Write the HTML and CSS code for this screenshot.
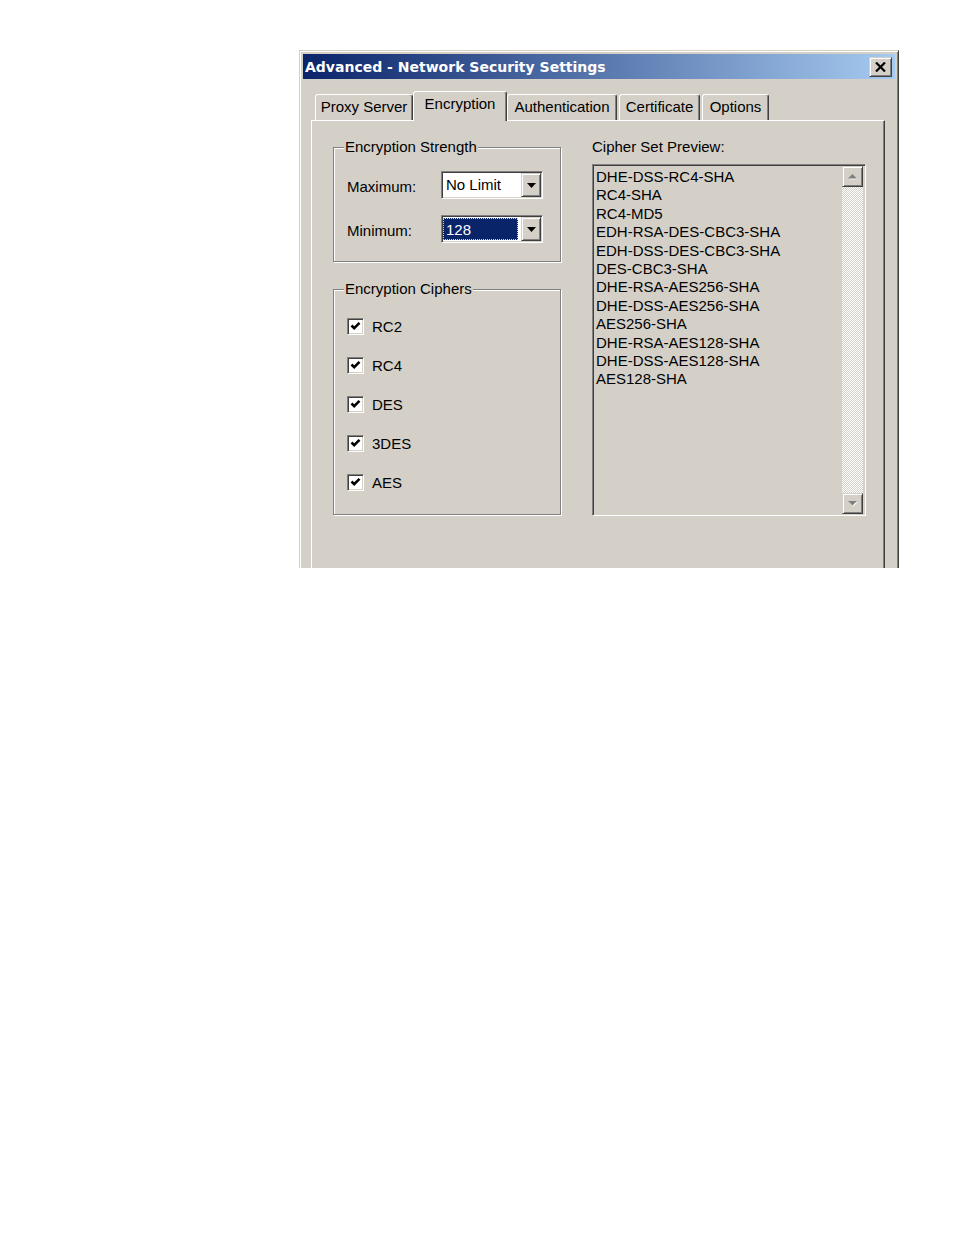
FILE: index.html
```html
<!DOCTYPE html>
<html>
<head>
<meta charset="utf-8">
<title>Advanced - Network Security Settings</title>
<link rel="stylesheet" href="styles.css">
</head>
<body>
<div class="dialog">
  <div class="titlebar">
    <span class="title">Advanced - Network Security Settings</span>
    <div class="close">
      <svg width="11" height="10" viewBox="0 0 11 10"><path d="M1 0.5 L10 9.5 M10 0.5 L1 9.5" stroke="#000" stroke-width="2.2" fill="none"/></svg>
    </div>
  </div>
  <div class="content">
    <div class="tabs">
      <div class="tab t-proxy">Proxy Server</div>
      <div class="tab active t-enc">Encryption</div>
      <div class="tab t-auth">Authentication</div>
      <div class="tab t-cert">Certificate</div>
      <div class="tab t-opt">Options</div>
    </div>
    <div class="panel">
      <div class="left">
        <fieldset class="group">
          <legend>Encryption Strength</legend>
          <div class="group-inner strength">
            <div class="row">
              <span class="lbl">Maximum:</span>
              <div class="combo">
                <span class="value">No Limit</span>
                <span class="drop"><svg width="9" height="5" viewBox="0 0 9 5"><polygon points="0,0 9,0 4.5,5" fill="#000"/></svg></span>
              </div>
            </div>
            <div class="row">
              <span class="lbl">Minimum:</span>
              <div class="combo">
                <span class="value selected">128</span>
                <span class="drop"><svg width="9" height="5" viewBox="0 0 9 5"><polygon points="0,0 9,0 4.5,5" fill="#000"/></svg></span>
              </div>
            </div>
          </div>
        </fieldset>
        <fieldset class="group ciphers">
          <legend>Encryption Ciphers</legend>
          <div class="group-inner checks">
            <div class="check-row"><span class="checkbox"><svg width="11" height="10" viewBox="0 0 11 10"><polyline points="1.5,4.5 4.2,7.2 9.5,1.8" stroke="#000" stroke-width="2.6" fill="none"/></svg></span><span>RC2</span></div>
            <div class="check-row"><span class="checkbox"><svg width="11" height="10" viewBox="0 0 11 10"><polyline points="1.5,4.5 4.2,7.2 9.5,1.8" stroke="#000" stroke-width="2.6" fill="none"/></svg></span><span>RC4</span></div>
            <div class="check-row"><span class="checkbox"><svg width="11" height="10" viewBox="0 0 11 10"><polyline points="1.5,4.5 4.2,7.2 9.5,1.8" stroke="#000" stroke-width="2.6" fill="none"/></svg></span><span>DES</span></div>
            <div class="check-row"><span class="checkbox"><svg width="11" height="10" viewBox="0 0 11 10"><polyline points="1.5,4.5 4.2,7.2 9.5,1.8" stroke="#000" stroke-width="2.6" fill="none"/></svg></span><span>3DES</span></div>
            <div class="check-row"><span class="checkbox"><svg width="11" height="10" viewBox="0 0 11 10"><polyline points="1.5,4.5 4.2,7.2 9.5,1.8" stroke="#000" stroke-width="2.6" fill="none"/></svg></span><span>AES</span></div>
          </div>
        </fieldset>
      </div>
      <div class="right">
        <div class="preview-label">Cipher Set Preview:</div>
        <div class="listbox">
          <div class="items">
            <div>DHE-DSS-RC4-SHA</div>
            <div>RC4-SHA</div>
            <div>RC4-MD5</div>
            <div>EDH-RSA-DES-CBC3-SHA</div>
            <div>EDH-DSS-DES-CBC3-SHA</div>
            <div>DES-CBC3-SHA</div>
            <div>DHE-RSA-AES256-SHA</div>
            <div>DHE-DSS-AES256-SHA</div>
            <div>AES256-SHA</div>
            <div>DHE-RSA-AES128-SHA</div>
            <div>DHE-DSS-AES128-SHA</div>
            <div>AES128-SHA</div>
          </div>
          <div class="scrollbar">
            <div class="sbtn"><svg width="11" height="7" viewBox="0 0 11 7"><polygon points="1,5.5 10,5.5 5.5,1" fill="#fff" transform="translate(0.8,0.8)"/><polygon points="1,5.5 10,5.5 5.5,1" fill="#808080"/></svg></div>
            <div class="track"></div>
            <div class="sbtn"><svg width="11" height="7" viewBox="0 0 11 7"><polygon points="1,1 10,1 5.5,5.5" fill="#fff" transform="translate(0.8,0.8)"/><polygon points="1,1 10,1 5.5,5.5" fill="#808080"/></svg></div>
          </div>
        </div>
      </div>
    </div>
  </div>
</div>
</body>
</html>
```

FILE: styles.css
```css
html, body {
  margin: 0;
  background: #fff;
}
body {
  font-family: "Liberation Sans", Arial, sans-serif;
  font-size: 15px;
  color: #000;
}

.dialog {
  box-sizing: border-box;
  width: 600px;
  height: 518px;
  margin: 50px 0 0 299px;
  background: #d4d0c8;
  border: 1px solid;
  border-color: #d4d0c8 #404040 transparent #d4d0c8;
  border-bottom: none;
  box-shadow: inset 1px 1px #fff, inset -1px 0 #808080;
  padding: 3px 3px 0 3px;
  overflow: hidden;
}

.titlebar {
  height: 25px;
  display: flex;
  align-items: center;
  justify-content: space-between;
  background: linear-gradient(to right, #0a246a, #a6caf0);
  padding: 0 3px 0 2px;
}
.title {
  color: #fff;
  font-family: "DejaVu Sans", Verdana, sans-serif;
  font-weight: bold;
  font-size: 14px;
  white-space: nowrap;
}
.close {
  box-sizing: border-box;
  width: 23px;
  height: 20px;
  background: #d4d0c8;
  border: 1px solid;
  border-color: #d4d0c8 #404040 #404040 #d4d0c8;
  box-shadow: inset 1px 1px #fff, inset -1px -1px #808080;
  display: flex;
  align-items: center;
  justify-content: center;
}

.content {
  padding: 12px 10px 0 8px;
}

.tabs {
  display: flex;
  align-items: flex-end;
  height: 29px;
  padding-left: 4px;
}
.tab {
  box-sizing: border-box;
  height: 26px;
  border: 1px solid;
  border-bottom: none;
  border-color: #fff #404040 transparent #fff;
  box-shadow: inset -1px 0 #808080;
  border-radius: 3px 3px 0 0;
  text-align: center;
  line-height: 24px;
  white-space: nowrap;
  background: #d4d0c8;
}
.tab.active {
  height: 30px;
  margin-bottom: -1px;
  position: relative;
  z-index: 2;
}
.t-proxy { width: 98px; }
.t-enc { width: 94px; }
.t-auth { width: 110px; }
.t-cert { width: 81px; margin-left: 2px; }
.t-opt { width: 67px; margin-left: 2px; }

.panel {
  box-sizing: border-box;
  height: 470px;
  border: 1px solid;
  border-color: #fff #404040 transparent #fff;
  border-bottom: none;
  box-shadow: inset -1px 0 #808080;
  display: grid;
  grid-template-columns: 228px 274px;
  column-gap: 31px;
  align-items: start;
  padding: 17px 0 0 21px;
  position: relative;
  z-index: 1;
}

.group {
  margin: 0;
  padding: 0;
  min-width: 0;
  border: 1px solid #808080;
  box-shadow: inset 1px 1px #fff, 1px 1px #fff;
}
.group legend {
  margin-left: 10px;
  padding: 0 1px;
  line-height: 18px;
  background: #d4d0c8;
  white-space: nowrap;
}
.group.ciphers {
  margin-top: 18px;
}
.group-inner {
  padding-left: 13px;
}
.strength {
  padding-top: 15px;
  padding-bottom: 18px;
  display: flex;
  flex-direction: column;
  gap: 16px;
}
.row {
  display: flex;
  align-items: center;
  height: 28px;
}
.lbl {
  width: 94px;
  padding-top: 3px;
}

.combo {
  box-sizing: border-box;
  width: 102px;
  height: 28px;
  border: 1px solid;
  border-color: #808080 #fff #fff #808080;
  box-shadow: inset 1px 1px #404040, inset -1px -1px #d4d0c8;
  background: #fff;
  display: flex;
  padding: 1px;
}
.value {
  flex: 1;
  padding-left: 3px;
  line-height: 24px;
}
.value.selected {
  background: #0a246a;
  color: #fff;
  padding-left: 2px;
  margin: 1px 3px 1px 0;
  line-height: 22px;
  border: 1px dotted #e8e070;
}
.drop {
  box-sizing: border-box;
  width: 20px;
  height: 24px;
  background: #d4d0c8;
  border: 1px solid;
  border-color: #d4d0c8 #404040 #404040 #d4d0c8;
  box-shadow: inset 1px 1px #fff, inset -1px -1px #808080;
  display: flex;
  align-items: center;
  justify-content: center;
}

.checks {
  padding-top: 18px;
  padding-bottom: 22px;
  display: flex;
  flex-direction: column;
  gap: 19px;
}
.check-row {
  display: flex;
  align-items: center;
  height: 20px;
}
.checkbox {
  box-sizing: border-box;
  width: 17px;
  height: 17px;
  margin-right: 8px;
  border: 1px solid;
  border-color: #808080 #fff #fff #808080;
  box-shadow: inset 1px 1px #404040, inset -1px -1px #d4d0c8;
  background: #fff;
  display: flex;
  align-items: center;
  justify-content: center;
}

.preview-label {
  line-height: 18px;
  margin-bottom: 8px;
  white-space: nowrap;
}
.listbox {
  box-sizing: border-box;
  width: 274px;
  height: 352px;
  border: 1px solid;
  border-color: #808080 #fff #fff #808080;
  box-shadow: inset 1px 1px #404040, inset -1px -1px #d4d0c8;
  padding: 2px;
  display: flex;
}
.items {
  flex: 1;
  padding: 1px 0 0 1px;
  line-height: 18.4px;
  white-space: nowrap;
}
.scrollbar {
  width: 21px;
  display: flex;
  flex-direction: column;
  margin-top: -1px;
  margin-bottom: -1px;
}
.sbtn {
  box-sizing: border-box;
  width: 21px;
  height: 21px;
  background: #d4d0c8;
  border: 1px solid;
  border-color: #d4d0c8 #404040 #404040 #d4d0c8;
  box-shadow: inset 1px 1px #fff, inset -1px -1px #808080;
  display: flex;
  align-items: center;
  justify-content: center;
}
.track {
  flex: 1;
  background-image: repeating-conic-gradient(#fff 0 25%, #d4d0c8 0 50%);
  background-size: 2px 2px;
}
```
